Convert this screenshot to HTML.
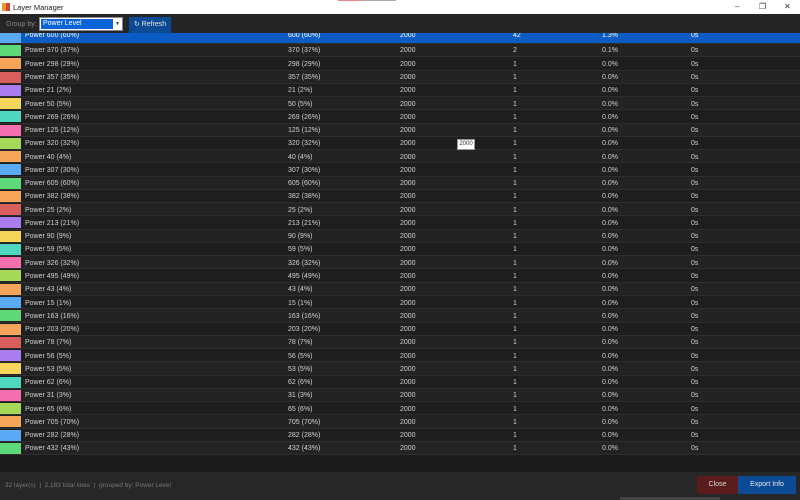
<!DOCTYPE html>
<html><head><meta charset="utf-8"><style>
*{margin:0;padding:0;box-sizing:border-box}
body{width:800px;height:500px;overflow:hidden;background:#1a1a1a;font-family:"Liberation Sans",sans-serif;font-size:7px;color:#d0d0d0;position:relative}
.title{position:absolute;left:0;top:0;width:800px;height:14px;background:#fff;color:#222;font-size:7.5px}
.title .t{position:absolute;left:13px;top:3px}
.ic{position:absolute;left:2px;top:3px;width:8px;height:8px;background:linear-gradient(90deg,#e8a020 50%,#d04040 50%)}
.ctl{position:absolute;top:2px;font-size:8px;color:#333}
.tb{position:absolute;left:0;top:14px;width:800px;height:19px;background:#252526}
.lbl{position:absolute;left:6px;top:7px;color:#888}
.sel{position:absolute;left:39px;top:3px;width:84px;height:14px;background:#fff;border:1px solid #888}
.sel .v{position:absolute;left:1px;top:1px;width:72px;height:10px;background:#0a64d8;color:#fff;padding-left:2px;line-height:10px}
.sel .a{position:absolute;right:2px;top:3px;font-size:5px;color:#333}
.ref{position:absolute;left:129px;top:3px;width:42px;height:16px;background:#0b4a94;color:#e8e8e8;text-align:center;line-height:16px}
.list{position:absolute;left:0;top:33px;width:800px;height:423px;overflow:hidden}
.rows{position:absolute;left:0;top:-2.3px;width:800px}
.r{position:relative;height:13.27px;border-bottom:1px solid #2e2e2e;background:#1e1e1e}
.r:nth-child(even){background:#232323}
.r.s{background:#0a5bc4;color:#fff}
.r span{position:absolute;top:3.5px}
.r.s span{top:1px}
.sw{position:absolute;left:0;top:1px;width:21px;height:11px}
.c1{left:25px}.c2{left:288px}.c3{left:400px}.c4{left:513px}.c5{left:602px}.c6{left:691px}
.tip{position:absolute;left:457px;top:139px;width:18px;height:11px;background:#fff;border:1px solid #999;color:#333;font-size:6px;text-align:center;line-height:9px}
.sb{position:absolute;left:0;top:472px;width:800px;height:28px;background:#272727}
.st{position:absolute;left:5px;top:10px;color:#777;font-size:6.5px}
.cl{position:absolute;left:697px;top:476px;width:41px;height:18px;background:#5a1c1c;color:#ddd;text-align:center;line-height:18px}
.ex{position:absolute;left:738px;top:476px;width:58px;height:18px;background:#0b4a94;color:#e8e8e8;text-align:center;line-height:18px}
.scr{position:absolute;left:620px;top:497px;width:100px;height:3px;background:#444}
</style></head><body>
<div class="title"><div class="ic"></div><span class="t">Layer Manager</span>
<div style="position:absolute;left:338px;top:0;width:24px;height:1px;background:#e88"></div>
<div style="position:absolute;left:362px;top:0;width:34px;height:1px;background:#aaa"></div>
<span class="ctl" style="left:735px">–</span><span class="ctl" style="left:759px">❐</span><span class="ctl" style="left:784px">✕</span></div>
<div class="tb"><span class="lbl">Group by:</span><div class="sel"><div class="v">Power Level</div><span class="a">▼</span></div><div class="ref">↻ Refresh</div></div>
<div class="list"><div class="rows">
<div class="r s"><div class="sw" style="background:#5aa9f5"></div><span class="c1">Power 600 (60%)</span><span class="c2">600 (60%)</span><span class="c3">2000</span><span class="c4">42</span><span class="c5">1.3%</span><span class="c6">0s</span></div>
<div class="r"><div class="sw" style="background:#5ed97a"></div><span class="c1">Power 370 (37%)</span><span class="c2">370 (37%)</span><span class="c3">2000</span><span class="c4">2</span><span class="c5">0.1%</span><span class="c6">0s</span></div>
<div class="r"><div class="sw" style="background:#f5a45a"></div><span class="c1">Power 298 (29%)</span><span class="c2">298 (29%)</span><span class="c3">2000</span><span class="c4">1</span><span class="c5">0.0%</span><span class="c6">0s</span></div>
<div class="r"><div class="sw" style="background:#d95f5f"></div><span class="c1">Power 357 (35%)</span><span class="c2">357 (35%)</span><span class="c3">2000</span><span class="c4">1</span><span class="c5">0.0%</span><span class="c6">0s</span></div>
<div class="r"><div class="sw" style="background:#a97cf0"></div><span class="c1">Power 21 (2%)</span><span class="c2">21 (2%)</span><span class="c3">2000</span><span class="c4">1</span><span class="c5">0.0%</span><span class="c6">0s</span></div>
<div class="r"><div class="sw" style="background:#f5d65a"></div><span class="c1">Power 50 (5%)</span><span class="c2">50 (5%)</span><span class="c3">2000</span><span class="c4">1</span><span class="c5">0.0%</span><span class="c6">0s</span></div>
<div class="r"><div class="sw" style="background:#4fd6c0"></div><span class="c1">Power 269 (26%)</span><span class="c2">269 (26%)</span><span class="c3">2000</span><span class="c4">1</span><span class="c5">0.0%</span><span class="c6">0s</span></div>
<div class="r"><div class="sw" style="background:#f56fae"></div><span class="c1">Power 125 (12%)</span><span class="c2">125 (12%)</span><span class="c3">2000</span><span class="c4">1</span><span class="c5">0.0%</span><span class="c6">0s</span></div>
<div class="r"><div class="sw" style="background:#a6d95a"></div><span class="c1">Power 320 (32%)</span><span class="c2">320 (32%)</span><span class="c3">2000</span><span class="c4">1</span><span class="c5">0.0%</span><span class="c6">0s</span></div>
<div class="r"><div class="sw" style="background:#f5a55a"></div><span class="c1">Power 40 (4%)</span><span class="c2">40 (4%)</span><span class="c3">2000</span><span class="c4">1</span><span class="c5">0.0%</span><span class="c6">0s</span></div>
<div class="r"><div class="sw" style="background:#5aa9f5"></div><span class="c1">Power 307 (30%)</span><span class="c2">307 (30%)</span><span class="c3">2000</span><span class="c4">1</span><span class="c5">0.0%</span><span class="c6">0s</span></div>
<div class="r"><div class="sw" style="background:#5ed97a"></div><span class="c1">Power 605 (60%)</span><span class="c2">605 (60%)</span><span class="c3">2000</span><span class="c4">1</span><span class="c5">0.0%</span><span class="c6">0s</span></div>
<div class="r"><div class="sw" style="background:#f5a45a"></div><span class="c1">Power 382 (38%)</span><span class="c2">382 (38%)</span><span class="c3">2000</span><span class="c4">1</span><span class="c5">0.0%</span><span class="c6">0s</span></div>
<div class="r"><div class="sw" style="background:#d95f5f"></div><span class="c1">Power 25 (2%)</span><span class="c2">25 (2%)</span><span class="c3">2000</span><span class="c4">1</span><span class="c5">0.0%</span><span class="c6">0s</span></div>
<div class="r"><div class="sw" style="background:#a97cf0"></div><span class="c1">Power 213 (21%)</span><span class="c2">213 (21%)</span><span class="c3">2000</span><span class="c4">1</span><span class="c5">0.0%</span><span class="c6">0s</span></div>
<div class="r"><div class="sw" style="background:#f5d65a"></div><span class="c1">Power 90 (9%)</span><span class="c2">90 (9%)</span><span class="c3">2000</span><span class="c4">1</span><span class="c5">0.0%</span><span class="c6">0s</span></div>
<div class="r"><div class="sw" style="background:#4fd6c0"></div><span class="c1">Power 59 (5%)</span><span class="c2">59 (5%)</span><span class="c3">2000</span><span class="c4">1</span><span class="c5">0.0%</span><span class="c6">0s</span></div>
<div class="r"><div class="sw" style="background:#f56fae"></div><span class="c1">Power 326 (32%)</span><span class="c2">326 (32%)</span><span class="c3">2000</span><span class="c4">1</span><span class="c5">0.0%</span><span class="c6">0s</span></div>
<div class="r"><div class="sw" style="background:#a6d95a"></div><span class="c1">Power 495 (49%)</span><span class="c2">495 (49%)</span><span class="c3">2000</span><span class="c4">1</span><span class="c5">0.0%</span><span class="c6">0s</span></div>
<div class="r"><div class="sw" style="background:#f5a55a"></div><span class="c1">Power 43 (4%)</span><span class="c2">43 (4%)</span><span class="c3">2000</span><span class="c4">1</span><span class="c5">0.0%</span><span class="c6">0s</span></div>
<div class="r"><div class="sw" style="background:#5aa9f5"></div><span class="c1">Power 15 (1%)</span><span class="c2">15 (1%)</span><span class="c3">2000</span><span class="c4">1</span><span class="c5">0.0%</span><span class="c6">0s</span></div>
<div class="r"><div class="sw" style="background:#5ed97a"></div><span class="c1">Power 163 (16%)</span><span class="c2">163 (16%)</span><span class="c3">2000</span><span class="c4">1</span><span class="c5">0.0%</span><span class="c6">0s</span></div>
<div class="r"><div class="sw" style="background:#f5a45a"></div><span class="c1">Power 203 (20%)</span><span class="c2">203 (20%)</span><span class="c3">2000</span><span class="c4">1</span><span class="c5">0.0%</span><span class="c6">0s</span></div>
<div class="r"><div class="sw" style="background:#d95f5f"></div><span class="c1">Power 78 (7%)</span><span class="c2">78 (7%)</span><span class="c3">2000</span><span class="c4">1</span><span class="c5">0.0%</span><span class="c6">0s</span></div>
<div class="r"><div class="sw" style="background:#a97cf0"></div><span class="c1">Power 56 (5%)</span><span class="c2">56 (5%)</span><span class="c3">2000</span><span class="c4">1</span><span class="c5">0.0%</span><span class="c6">0s</span></div>
<div class="r"><div class="sw" style="background:#f5d65a"></div><span class="c1">Power 53 (5%)</span><span class="c2">53 (5%)</span><span class="c3">2000</span><span class="c4">1</span><span class="c5">0.0%</span><span class="c6">0s</span></div>
<div class="r"><div class="sw" style="background:#4fd6c0"></div><span class="c1">Power 62 (6%)</span><span class="c2">62 (6%)</span><span class="c3">2000</span><span class="c4">1</span><span class="c5">0.0%</span><span class="c6">0s</span></div>
<div class="r"><div class="sw" style="background:#f56fae"></div><span class="c1">Power 31 (3%)</span><span class="c2">31 (3%)</span><span class="c3">2000</span><span class="c4">1</span><span class="c5">0.0%</span><span class="c6">0s</span></div>
<div class="r"><div class="sw" style="background:#a6d95a"></div><span class="c1">Power 65 (6%)</span><span class="c2">65 (6%)</span><span class="c3">2000</span><span class="c4">1</span><span class="c5">0.0%</span><span class="c6">0s</span></div>
<div class="r"><div class="sw" style="background:#f5a55a"></div><span class="c1">Power 705 (70%)</span><span class="c2">705 (70%)</span><span class="c3">2000</span><span class="c4">1</span><span class="c5">0.0%</span><span class="c6">0s</span></div>
<div class="r"><div class="sw" style="background:#5aa9f5"></div><span class="c1">Power 282 (28%)</span><span class="c2">282 (28%)</span><span class="c3">2000</span><span class="c4">1</span><span class="c5">0.0%</span><span class="c6">0s</span></div>
<div class="r"><div class="sw" style="background:#5ed97a"></div><span class="c1">Power 432 (43%)</span><span class="c2">432 (43%)</span><span class="c3">2000</span><span class="c4">1</span><span class="c5">0.0%</span><span class="c6">0s</span></div>
</div></div>
<div class="tip">2000</div>
<div class="sb"><span class="st">32 layer(s) &nbsp;|&nbsp; 2,183 total lines &nbsp;|&nbsp; grouped by: Power Level</span></div>
<div class="cl">Close</div><div class="ex">Export Info</div>
<div class="scr"></div>
</body></html>
